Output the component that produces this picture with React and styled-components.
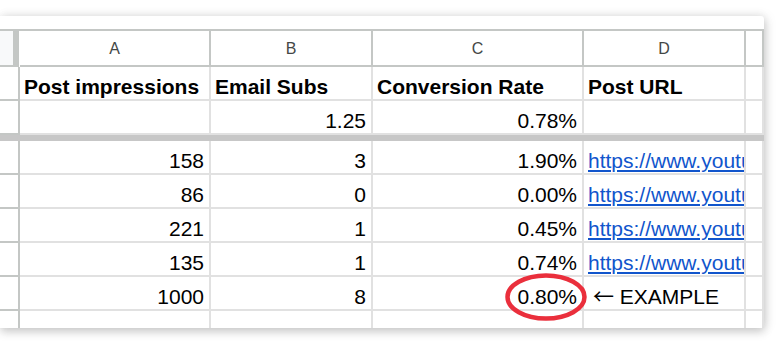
import styled, { createGlobalStyle } from 'styled-components';

const GlobalStyle = createGlobalStyle`
  html, body {
    margin: 0;
    padding: 0;
    background: #fff;
  }
  body {
    font-family: "Liberation Sans", Arial, Helvetica, sans-serif;
    overflow: hidden;
  }
`;

// widths include the 2px grid line on the right of each column
const COLS = '20px 191px 162px 211px 162px 18px';

const rows = [
  { imp: '158', subs: '3', rate: '1.90%', url: 'https://www.youtube.com/watch?v=8fTq' },
  { imp: '86', subs: '0', rate: '0.00%', url: 'https://www.youtube.com/watch?v=Lk2a' },
  { imp: '221', subs: '1', rate: '0.45%', url: 'https://www.youtube.com/watch?v=Qw9z' },
  { imp: '135', subs: '1', rate: '0.74%', url: 'https://www.youtube.com/watch?v=Zr4m' },
];

const Sheet = () => {
  return (
    <Page>
      <GlobalStyle />
      <Card>
        <Grid>
          <Corner />
          {['A', 'B', 'C', 'D'].map((l) => (
            <ColHead key={l}>{l}</ColHead>
          ))}
          <ColHead />

          <RowHead />
          <Cell $bold>Post impressions</Cell>
          <Cell $bold>Email Subs</Cell>
          <Cell $bold>Conversion Rate</Cell>
          <Cell $bold>Post URL</Cell>
          <Cell />

          <RowHead />
          <Cell />
          <Cell $right>1.25</Cell>
          <Cell $right>0.78%</Cell>
          <Cell />
          <Cell />

          <FrozenBar />

          {rows.map((r, i) => (
            <Row key={i}>
              <RowHead />
              <Cell $right>{r.imp}</Cell>
              <Cell $right>{r.subs}</Cell>
              <Cell $right>{r.rate}</Cell>
              <Cell $clip>
                <Link href="#">{r.url}</Link>
              </Cell>
              <Cell />
            </Row>
          ))}

          <RowHead />
          <Cell $right>1000</Cell>
          <Cell $right>8</Cell>
          <Cell $right $marked>
            0.80%
            <Circle width="82" height="48" viewBox="0 0 82 48">
              <ellipse cx="41" cy="24" rx="38.5" ry="21.5" fill="none" stroke="#ea2f3c" strokeWidth="4.5" />
            </Circle>
          </Cell>
          <Cell $note>
            <Arrow>←</Arrow> EXAMPLE
          </Cell>
          <Cell />

          <RowHead />
          <Cell />
          <Cell />
          <Cell />
          <Cell />
          <Cell />
        </Grid>
      </Card>
    </Page>
  );
};

const Page = styled.div`
  width: 782px;
  height: 346px;
  background: #fff;
  padding-top: 16px;
  box-sizing: border-box;
`;

const Card = styled.div`
  width: 764px;
  height: 312px;
  background: #fff;
  padding-top: 13px;
  box-sizing: border-box;
  overflow: hidden;
  border-top-right-radius: 3px;
  box-shadow: 0 4px 10px rgba(0, 0, 0, 0.18), 3px 0 12px rgba(0, 0, 0, 0.08), 0 -3px 8px rgba(0, 0, 0, 0.03);
`;

const Grid = styled.div`
  display: grid;
  grid-template-columns: ${COLS};
  grid-auto-rows: 34px;
  grid-template-rows: 36px 34px 34px 6px;
  border-top: 2px solid #c4c7c5;
  font-size: 21px;
  color: #000;
`;

const Row = styled.div`
  display: contents;
`;

const Corner = styled.div`
  box-sizing: border-box;
  background: #f8f9fa;
  border-right: 6px solid #c4c7c5;
  border-bottom: 2px solid #c4c7c5;
  width: 19px;
`;

const ColHead = styled.div`
  box-sizing: border-box;
  display: flex;
  align-items: center;
  justify-content: center;
  border-right: 2px solid #c4c7c5;
  border-bottom: 2px solid #c4c7c5;
  font-size: 16px;
  color: #444746;
  padding-top: 1px;
`;

const RowHead = styled.div`
  box-sizing: border-box;
  border-right: 2px solid #c4c7c5;
  border-bottom: 2px solid #c4c7c5;
`;

const Cell = styled.div`
  box-sizing: border-box;
  position: relative;
  display: flex;
  align-items: flex-end;
  justify-content: ${(p) => (p.$right ? 'flex-end' : 'flex-start')};
  padding: 0 ${(p) => (p.$right ? '5px' : '4px')} 0 ${(p) => (p.$note ? '9px' : '4px')};
  border-right: 2px solid #e1e1e1;
  border-bottom: 2px solid #e1e1e1;
  font-weight: ${(p) => (p.$bold ? 700 : 400)};
  white-space: pre;
  overflow: ${(p) => (p.$clip ? 'hidden' : 'visible')};
  z-index: ${(p) => (p.$marked ? 2 : 'auto')};
`;

const Arrow = styled.span`
  font-family: "Noto Sans CJK JP", "DejaVu Sans", sans-serif;
  font-size: 21px;
  line-height: 1;
  margin-bottom: 3px;
`;

const FrozenBar = styled.div`
  grid-column: 1 / -1;
  background: #c7c7c7;
`;

const Link = styled.a`
  color: #1155cc;
  text-decoration: underline;
  text-decoration-thickness: 2px;
  text-underline-offset: 2px;
`;

const Circle = styled.svg`
  position: absolute;
  left: 132px;
  top: -4px;
  pointer-events: none;
`;

export default Sheet;
